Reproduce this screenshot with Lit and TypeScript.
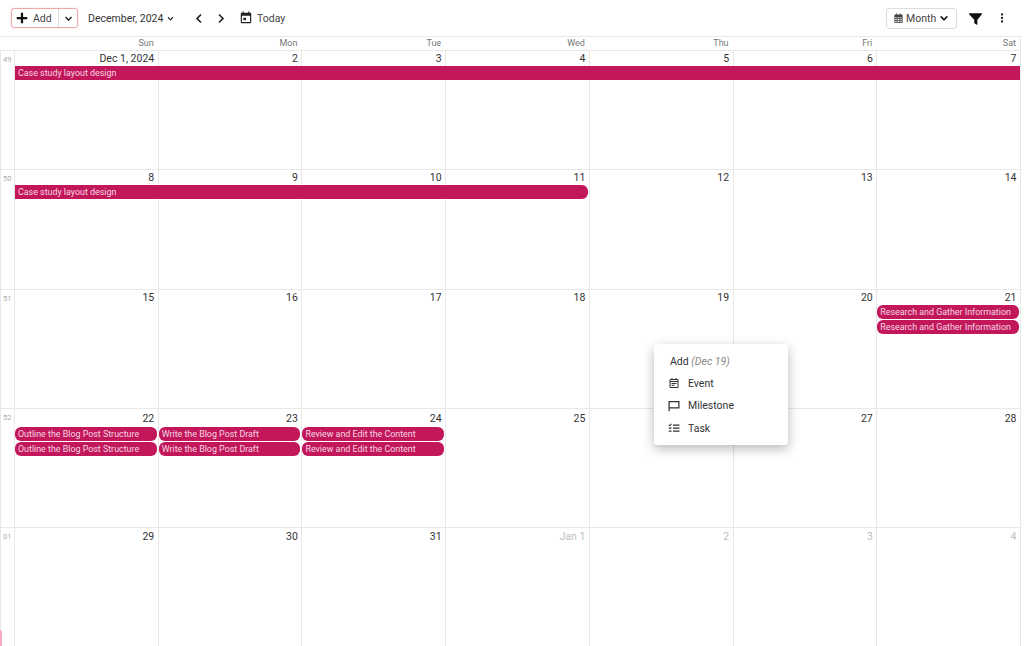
import { LitElement, html, css, svg } from "lit";
import { customElement } from "lit/decorators.js";

type Ev = { label: string; start: number; span: number; row: number; left?: boolean; right?: boolean };
type Week = { no: string; head: number; pad: number; days: { t: string; muted?: boolean }[]; events: Ev[] };

const d = (...a: string[]) => a.map((t) => ({ t }));
const weeks: Week[] = [
  { no: "49", head: 15, pad: 0, days: d("Dec 1, 2024", "2", "3", "4", "5", "6", "7"), events: [{ label: "Case study layout design", start: 0, span: 7, row: 0 }] },
  { no: "50", head: 15, pad: 0, days: d("8", "9", "10", "11", "12", "13", "14"), events: [{ label: "Case study layout design", start: 0, span: 4, row: 0, right: true }] },
  {
    no: "51",
    head: 15,
    pad: 0,
    days: d("15", "16", "17", "18", "19", "20", "21"),
    events: [
      { label: "Research and Gather Information", start: 6, span: 1, row: 0, left: true, right: true },
      { label: "Research and Gather Information", start: 6, span: 1, row: 1, left: true, right: true },
    ],
  },
  {
    no: "52",
    head: 18,
    pad: 2,
    days: d("22", "23", "24", "25", "26", "27", "28"),
    events: [0, 1].flatMap((row) => [
      { label: "Outline the Blog Post Structure", start: 0, span: 1, row, left: true, right: true },
      { label: "Write the Blog Post Draft", start: 1, span: 1, row, left: true, right: true },
      { label: "Review and Edit the Content", start: 2, span: 1, row, left: true, right: true },
    ]),
  },
  {
    no: "01",
    head: 15,
    pad: 1,
    days: [{ t: "29" }, { t: "30" }, { t: "31" }, { t: "Jan 1", muted: true }, { t: "2", muted: true }, { t: "3", muted: true }, { t: "4", muted: true }],
    events: [],
  },
];

const icon = (size: number, body: unknown, cls = "") =>
  html`<svg class=${cls} width=${size} height=${size} viewBox="0 0 24 24" fill="currentColor" aria-hidden="true">${body}</svg>`;

const plus = svg`<path d="M19 13.500h-5.500V19h-3v-5.500H5v-3h5.500V5h3v5.500H19z"/>`;
const chevDown = svg`<path d="M6.600 7.600 12 13l5.400-5.400 2.400 2.400L12 17.800 4.200 10z"/>`;
const chevLeft = svg`<path d="M16.500 4.500 9 12l7.500 7.500-2.500 2.500L4 12 14 2z"/>`;
const chevRight = svg`<path d="M7.500 4.500 15 12l-7.500 7.500L10 22l10-10L10 2z"/>`;
const today = svg`<path d="M19 3h-1V1h-2v2H8V1H6v2H5a2 2 0 0 0-2 2v14a2 2 0 0 0 2 2h14a2 2 0 0 0 2-2V5a2 2 0 0 0-2-2zm0 16H5V8h14zM7.500 11.500h4.500V16H7.500z"/>`;
const calGrid = svg`<path d="M7 1h2v2h6V1h2v2h2a2 2 0 0 1 2 2v15a2 2 0 0 1-2 2H5a2 2 0 0 1-2-2V5a2 2 0 0 1 2-2h2zM5 9v2.500h3V9zm5 0v2.500h4V9zm6 0v2.500h3V9zM5 13v2.500h3V13zm5 0v2.500h4V13zm6 0v2.500h3V13zM5 17v3h3v-3zm5 0v3h4v-3zm6 0v3h3v-3z"/>`;
const funnel = svg`<path d="M2.500 3.500h19a1 1 0 0 1 .8 1.600L15 14v7.200a.8.8 0 0 1-1.200.7l-3.400-2.200a1 1 0 0 1-.4-.8V14L1.700 5.100A1 1 0 0 1 2.500 3.500z"/>`;
const dots = svg`<circle cx="12" cy="5" r="2.300"/><circle cx="12" cy="12" r="2.300"/><circle cx="12" cy="19" r="2.300"/>`;
const menuEvent = svg`<path d="M7 2h2v2h6V2h2v2h1.500A2.500 2.500 0 0 1 21 6.500v13a2.500 2.500 0 0 1-2.500 2.500h-13A2.500 2.500 0 0 1 3 19.500v-13A2.500 2.500 0 0 1 5.500 4H7zM5 10v9.500c0 .3.200.5.500.5h13c.3 0 .5-.2.500-.5V10zm0-2h14V6.500c0-.3-.2-.5-.5-.5h-13c-.3 0-.5.200-.5.500zm2 4h10v2H7zm0 3.500h6v2H7z"/>`;
const menuFlag = svg`<path d="M1 2h22v15H3.500v5.500H1zm2.500 2.500v10h17v-10z"/>`;
const menuTask = svg`<path d="M10 5h13v2.500H10zm0 6h13v2.500H10zm0 6h13v2.500H10zM3.500 8.800 1 6.300l1.400-1.400 1.100 1.100L6.300 3.200l1.400 1.400zM1.500 11h5.500v2.500H1.500zm0 6h5.500v2.500H1.500z"/>`;

@customElement("app-root")
export class AppRoot extends LitElement {
  static styles = css`
    :host {
      display: block;
      position: relative;
      width: 1024px;
      height: 646px;
      overflow: hidden;
      background: #fff;
      color: #212121;
      font-family: Roboto, "Liberation Sans", sans-serif;
    }
    svg { display: block; flex: none; }
    .toolbar {
      height: 36px;
      box-sizing: border-box;
      display: flex;
      align-items: center;
      padding: 0 16px 0 11px;
      font-size: 10.500px;
    }
    .split {
      display: flex;
      align-items: stretch;
      height: 20px;
      width: 67px;
      box-sizing: border-box;
      border: 1px solid #eba9a9;
      border-radius: 3px;
      color: #444;
      box-shadow: 0 0 2px #ead6e6;
    }
    .split .main {
      display: flex;
      align-items: center;
      gap: 2px;
      width: 47px;
      padding-left: 1px;
      box-sizing: border-box;
      border-right: 1px solid #ddd;
    }
    .split .main svg { color: #111; }
    .split .more { flex: 1; display: flex; align-items: center; justify-content: center; color: #333; }
    .month {
      margin-left: 10px;
      display: flex;
      align-items: center;
      gap: 3px;
      color: #333;
      width: 105.500px;
    }
    .nav { display: flex; color: #222; gap: 10px; }
    .today { display: flex; align-items: center; gap: 4px; margin-left: 13.500px; color: #444; }
    .today svg { color: #222; }
    .spacer { flex: 1; }
    .view {
      display: flex;
      align-items: center;
      width: 71px;
      height: 21px;
      box-sizing: border-box;
      border: 1px solid #ddd;
      border-radius: 3px;
      padding: 0 6px;
      gap: 2px;
      color: #444;
    }
    .view .chev { margin-left: auto; color: #222; }
    .filter { margin-left: 11px; color: #111; }
    .kebab { margin-left: 13px; color: #222; }
    .grid {
      width: 1021px;
      box-sizing: border-box;
      border-top: 1px solid #e8e8e8;
      border-right: 1px solid #e8e8e8;
    }
    .cols { display: grid; grid-template-columns: 14px repeat(7, 1fr); }
    .head {
      height: 13px;
      border-bottom: 1px solid #e8e8e8;
      font-size: 9px;
      color: #777;
      line-height: 13px;
    }
    .head div { text-align: right; padding-right: 4px; }
    .week {
      height: 118.250px;
      border-bottom: 1px solid #e8e8e8;
      grid-template-rows: var(--head) 15px 15px 1fr;
    }
    .weekno {
      grid-column: 1;
      grid-row: 1 / -1;
      font-size: 7.500px;
      color: #aaa;
      padding: 4px 0 0 2px;
      border-left: 1px solid #e8e8e8;
    }
    .day {
      grid-row: 1 / -1;
      border-left: 1px solid #e8e8e8;
    }
    .num {
      text-align: right;
      font-size: 10.500px;
      line-height: 15px;
      padding: var(--pad) 3.500px 0 0;
      color: #333;
    }
    .num.muted { color: #bdbdbd; }
    .ev {
      height: 14px;
      align-self: start;
      margin-left: 1px;
      background: #c2185b;
      color: #f6d5e2;
      font-size: 8.900px;
      line-height: 14px;
      padding-left: 3px;
      white-space: nowrap;
      overflow: hidden;
      z-index: 1;
    }
    .ev.l { border-top-left-radius: 6px; border-bottom-left-radius: 6px; }
    .ev.r { border-top-right-radius: 6px; border-bottom-right-radius: 6px; margin-right: 1px; }
    .menu {
      position: absolute;
      left: 654px;
      top: 344px;
      width: 134px;
      height: 101px;
      box-sizing: border-box;
      background: #fff;
      border-radius: 3px;
      box-shadow: 0 4px 12px rgba(0, 0, 0, 0.28);
      padding: 10px 0 0 14px;
      z-index: 2;
      font-size: 10.500px;
      color: #333;
    }
    .menu .title { height: 15px; line-height: 15px; padding: 0 0 2px 2px; }
    .menu .title i { color: #888; }
    .item { display: flex; align-items: center; gap: 8px; height: 22.500px; }
    .item.first { margin-top: 1px; }
    .flagmark {
      position: absolute;
      left: 0;
      top: 630px;
      width: 2px;
      height: 16px;
      background: #f8a8c4;
      border-radius: 0 2px 0 0;
    }
  `;

  render() {
    return html`
      <div class="toolbar">
        <div class="split">
          <div class="main">${icon(18, plus)}<span>Add</span></div>
          <div class="more">${icon(11, chevDown)}</div>
        </div>
        <div class="month"><span>December, 2024</span>${icon(9, chevDown)}</div>
        <div class="nav">${icon(11, chevLeft)}${icon(11, chevRight)}</div>
        <div class="today">${icon(14, today)}<span>Today</span></div>
        <div class="spacer"></div>
        <div class="view">${icon(11, calGrid)}<span>Month</span>${icon(12, chevDown, "chev")}</div>
        <div class="filter">${icon(15, funnel)}</div>
        <div class="kebab">${icon(12, dots)}</div>
      </div>
      <div class="grid">
        <div class="cols head">
          <span></span>
          ${["Sun", "Mon", "Tue", "Wed", "Thu", "Fri", "Sat"].map((n) => html`<div>${n}</div>`)}
        </div>
        ${weeks.map(
          (w) => html`
            <div class="cols week" style="--head:${w.head}px;--pad:${w.pad}px">
              <div class="weekno">${w.no}</div>
              ${w.days.map(
                (day, i) => html`<div class="day" style="grid-column:${i + 2}">
                  <div class="num ${day.muted ? "muted" : ""}">${day.t}</div>
                </div>`
              )}
              ${w.events.map(
                (e) => html`<div
                  class="ev ${e.left ? "l" : ""} ${e.right ? "r" : ""}"
                  style="grid-column:${e.start + 2} / span ${e.span};grid-row:${e.row + 2}"
                >${e.label}</div>`
              )}
            </div>
          `
        )}
      </div>
      <div class="menu">
        <div class="title">Add <i>(Dec 19)</i></div>
        <div class="item first">${icon(12, menuEvent)}<span>Event</span></div>
        <div class="item">${icon(12, menuFlag)}<span>Milestone</span></div>
        <div class="item">${icon(12, menuTask)}<span>Task</span></div>
      </div>
      <div class="flagmark"></div>
    `;
  }
}
